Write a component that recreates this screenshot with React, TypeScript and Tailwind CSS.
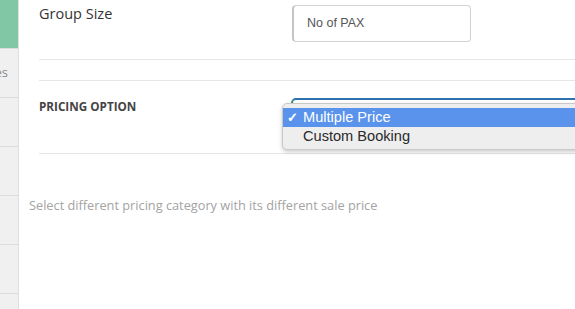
export default function App() {
  const side = ["", "Dates", "", "", "", "", ""];
  return (
    <div className="w-[575px] h-[309px] flex overflow-hidden bg-white" style={{ fontFamily: "'Open Sans', sans-serif" }}>
      <div className="w-[19px] shrink-0 bg-[#f0f0f0] border-r border-[#dedede] flex flex-col">
        {side.map((t, i) => (
          <div
            key={i}
            className={`h-[49px] shrink-0 border-b border-[#dcdcdc] flex items-center justify-end overflow-hidden pr-[10px] text-[13px] text-[#8a8a8a] ${i === 0 ? "bg-[#82c7a5]" : ""}`}
          >
            <span className="whitespace-nowrap">{t}</span>
          </div>
        ))}
      </div>
      <div className="flex-1 min-w-0 flex flex-col">
        <div className="ml-[20px]">
          <div className="h-[60px] border-b border-[#e6e6e6] grid grid-cols-[253px_1fr]">
            <div className="text-[14.5px] text-[#333] leading-[20px] mt-[4px]">Group Size</div>
            <div className="mt-[5px] w-[179px] h-[37px] rounded-[4px] border border-[#d2d2d2] border-l-2 border-l-[#c4c4c4] flex items-center pl-[13px] text-[12.5px] text-[#555]" style={{ fontFamily: "'Liberation Sans', Arial, sans-serif" }}>
              No of PAX
            </div>
          </div>
          <div className="mt-[20px] h-[74px] border-t border-b border-[#e6e6e6] grid grid-cols-[252px_1fr]">
            <div className="text-[11.7px] font-bold text-[#444] mt-[18px] leading-[14px]">PRICING OPTION</div>
            <div className="relative mt-[17px]">
              <div className="h-[36px] rounded-[5px] border-2 border-[#2b72ae] border-l-[#3a8f7a] -mr-[20px]"></div>
              <div
                className="absolute left-[-9px] top-[5px] w-[320px] h-[47px] rounded-[5px] bg-[#eeeeef] border border-[#c9c9c9] shadow-[0_2px_4px_rgba(0,0,0,0.2)] pt-[4px] text-[14.6px]"
                style={{ fontFamily: "'Liberation Sans', Arial, sans-serif" }}
              >
                <div className="h-[19px] bg-[#5a93ec] text-white flex items-center leading-none">
                  <span className="w-[20px] pl-[4px] text-[13px] font-bold">✓</span>
                  <span>Multiple Price</span>
                </div>
                <div className="h-[19px] text-[#2a2a2a] flex items-center pl-[20px] leading-none">Custom Booking</div>
              </div>
            </div>
          </div>
        </div>
        <div className="ml-[10px] mt-[43px] text-[12.75px] leading-[16px] text-[#a3a3a3] whitespace-nowrap">
          Select different pricing category with its different sale price
        </div>
      </div>
    </div>
  );
}
